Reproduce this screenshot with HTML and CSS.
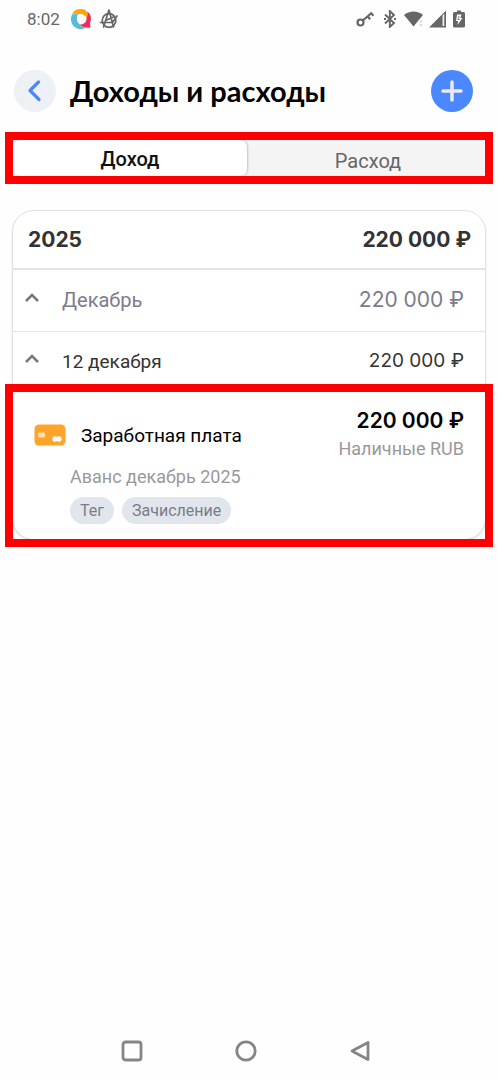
FILE: index.html
```html
<!DOCTYPE html>
<html lang="ru">
<head>
<meta charset="utf-8">
<meta name="viewport" content="width=device-width, initial-scale=1">
<title>Доходы и расходы</title>
<link rel="stylesheet" href="styles.css">
</head>
<body>
<div class="screen">
  <div class="status">
    <div class="status-group status-left">
      <span class="clock">8:02</span>
      <svg width="22" height="22" viewBox="0 0 22 22" aria-hidden="true">
        <path d="M2 6C4 2 8 .8 12 1c3.500.3 5 2 5.500 6l-.5 3.500C15 6.500 11 5 8 6.500 6 5.500 4 5.500 2 6z" fill="#ffa60d"/>
        <path d="M17.200 3.500C21 6 22 11 20 15l.5 4.500C16 20.500 12 19 9.500 16.500c4 0 7-2 7-6 1-2 1.200-4.500.7-7z" fill="#ec2d5f"/>
        <path d="M2 6.500c2-.8 4-.8 6 0-2 3.500-1.500 7 1.500 9.500 2 2.500 3.500 3.500 6.500 3.800-3.500 2.200-9 1.500-12-1.300C.5 15 .3 10 2 6.500z" fill="#55bdd5"/>
      </svg>
      <svg width="20" height="22" viewBox="0 0 20 22" fill="none" stroke="#666" stroke-width="1.700" stroke-linecap="round" stroke-linejoin="round" aria-hidden="true">
        <circle cx="10" cy="12.500" r="6.800"/>
        <path d="M4.500 19L10 2l4.500 17M1.500 14.500h12L18 8M6.500 12.500l8-3.500"/>
      </svg>
    </div>
    <div class="status-group status-right">
      <svg class="i-key" width="18" height="18" viewBox="0 0 18 18" fill="none" stroke="#666" stroke-width="2.200" aria-hidden="true">
        <circle cx="4.500" cy="12.500" r="3"/><path d="M6.800 10.500L15.500 3M14.500 2.500l3 3.200M11.200 6l3 3.200"/>
      </svg>
      <svg class="i-bt" width="12" height="18" viewBox="0 0 12 18" fill="none" stroke="#666" stroke-width="1.900" aria-hidden="true">
        <path d="M1 4.500l9 8.500-4.200 4V1L10 5 1 13.500"/><path d="M0 9h2M10 9h2" stroke-width="2"/>
      </svg>
      <svg class="i-wifi" width="20" height="18" viewBox="0 0 20 18" fill="#666" aria-hidden="true">
        <path d="M0 5C5 .3 14 .3 19 5L9.500 16.500z"/><path d="M15 12.500l2-3 2 3zM15 14l2 3 2-3z" fill="#ccc" stroke="#fff" stroke-width=".5"/>
      </svg>
      <svg class="i-cell" width="18" height="18" viewBox="0 0 18 18" aria-hidden="true">
        <path d="M0 17.500L17 .5v17z" fill="#666"/><path d="M13.500 5.500l1.800-1.800v12.300h-1.800z" fill="#eee"/>
      </svg>
      <svg width="12" height="18" viewBox="0 0 12 18" aria-hidden="true">
        <path d="M1.500 2H4V.5h4V2h2.500Q12 2 12 3.500v12.500q0 1.500-1.500 1.500h-9Q0 17.500 0 16V3.500Q0 2 1.500 2z" fill="#666"/>
        <path d="M4 4.500h4.500L7.500 8H9.500l-5 7L5 11H3z" fill="#fff"/><path d="M5.200 6.500h1l-1.500 3h2" fill="none" stroke="#666" stroke-width=".7"/>
      </svg>
    </div>
  </div>

  <header class="header">
    <button class="round back" type="button" aria-label="Назад">
      <svg width="42" height="42" viewBox="0 0 42 42" fill="none" stroke="#4b87fa" stroke-width="3.200" stroke-linecap="round" stroke-linejoin="round"><path d="M24.500 12L16 20.500l9 9"/></svg>
    </button>
    <h1 class="title">Доходы и расходы</h1>
    <button class="round add" type="button" aria-label="Добавить">
      <svg width="42" height="42" viewBox="0 0 42 42" fill="none" stroke="#ececf0" stroke-width="3.500" stroke-linecap="round"><path d="M21 12v18M12 21h18"/></svg>
    </button>
  </header>

  <div class="tabs" role="tablist">
    <button class="tab tab-active" type="button" role="tab" aria-selected="true">Доход</button>
    <button class="tab" type="button" role="tab" aria-selected="false">Расход</button>
    <span class="frame"></span>
  </div>

  <main class="card">
    <div class="year"><span>2025</span><span>220 000 ₽</span></div>
    <button class="group month" type="button" aria-expanded="true">
      <svg class="chevron" width="14" height="10" viewBox="0 0 14 10"><path d="M1 8L7 2l6 6"/></svg>
      <span class="group-name">Декабрь</span><span class="month-sum">220 000 ₽</span>
    </button>
    <button class="group day" type="button" aria-expanded="true">
      <svg class="chevron" width="14" height="10" viewBox="0 0 14 10"><path d="M1 8L7 2l6 6"/></svg>
      <span class="group-name">12 декабря</span><span class="day-sum">220 000 ₽</span>
    </button>
    <article class="entry">
      <div class="entry-top">
        <svg width="32" height="22" viewBox="0 0 32 22" aria-hidden="true">
          <rect x=".5" y=".5" width="31" height="21" rx="4.500" fill="#ffa329"/>
          <rect x="4" y="8.500" width="7" height="5" rx="1" fill="#ffdca9"/>
          <circle cx="21" cy="15" r="2.700" fill="#fff"/><circle cx="25" cy="15" r="2.700" fill="#fff"/>
        </svg>
        <span class="entry-name">Заработная плата</span>
        <div class="entry-money"><span class="entry-sum">220 000 ₽</span><span class="account">Наличные RUB</span></div>
      </div>
      <p class="note">Аванс декабрь 2025</p>
      <div class="tags"><span class="tag">Тег</span><span class="tag">Зачисление</span></div>
      <span class="frame"></span>
    </article>
  </main>

  <nav class="system-nav">
    <button type="button" aria-label="Недавние"><svg width="22" height="22" viewBox="0 0 22 22"><rect x="2" y="2" width="18" height="18" rx="2.500"/></svg></button>
    <button type="button" aria-label="Домой"><svg width="22" height="22" viewBox="0 0 22 22"><circle cx="11" cy="11" r="9.200"/></svg></button>
    <button type="button" aria-label="Назад"><svg width="22" height="22" viewBox="0 0 22 22"><path d="M19 2.500v17L3 11z"/></svg></button>
  </nav>
</div>
</body>
</html>
```
FILE: styles.css
```css
* { box-sizing: border-box; }
body { margin: 0; background: #fefefe; color: #000; font-family: Roboto, "Noto Sans", sans-serif; }
button { border: 0; padding: 0; background: none; color: inherit; font: inherit; }
svg { display: block; flex: none; }
.screen { min-height: 100vh; display: flex; flex-direction: column; }

.status { height: 37px; padding: 0 33px 0 27px; display: flex; justify-content: space-between; align-items: center; }
.status-group { display: flex; align-items: center; }
.status-left { gap: 7px; }
.clock { margin-right: 3px; font-size: 17px; color: #666; }
.i-key { margin-right: 10px; }
.i-bt { margin-right: 8px; }
.i-wifi { margin-right: 5px; }
.i-cell { margin-right: 6px; }

.header { height: 95px; padding: 13px 25px 0 14px; display: flex; align-items: center; }
.round { flex: none; width: 42px; height: 42px; border-radius: 50%; }
.back { background: #edf1f5; }
.add { background: #4b87fe; }
.title { flex: 1; margin: 0 0 0 14px; font: 700 29px/36px Lato, "Noto Sans", sans-serif; white-space: nowrap; }

.tabs { position: relative; margin: 8px 13px 0; height: 36px; display: flex; background: #f4f4f4; }
.tab { flex: 1; font-size: 20px; line-height: 24px; padding-top: 6px; color: #666; }
.tab-active { margin-right: 4px; padding-top: 2px; color: #111; font-weight: 500; background: #fff; border-radius: 7px; box-shadow: 1px 0 2px #0003; }
.frame { position: absolute; inset: -8px; border: 8px solid #f00; pointer-events: none; }

.card { margin: 34px 12px 0; border: 1px solid #e3e3e3; border-radius: 22px; background: #fff; box-shadow: 0 1px 2px #0002; }
.year { height: 59px; padding: 0 14px 0 15px; display: flex; justify-content: space-between; align-items: center; border-bottom: 2px solid #e3e3e3; font: 700 21px/28px Inter, sans-serif; color: #333; }
.group { width: 100%; padding: 0 21px 0 12px; display: flex; align-items: center; text-align: left; }
.chevron { margin: 0 23px 4px 0; fill: none; stroke: #777; stroke-width: 2.500px; }
.group-name { flex: 1; }
.month { height: 62px; padding-bottom: 2px; border-bottom: 1px solid #e3e3e3; font-size: 20px; color: #7c7c8c; }
.month-sum { font: 400 21px/28px Inter, sans-serif; }
.day { height: 60px; padding-bottom: 2px; font-size: 19px; color: #333; }
.day-sum { font: 400 19px/28px Inter, sans-serif; }

.entry { position: relative; padding: 15px 21px 15px; }
.entry-top { display: flex; align-items: center; }
.entry-name { flex: 1; margin-left: 15px; font-size: 19px; }
.entry-money { display: flex; flex-direction: column; align-items: flex-end; }
.entry-sum { font: 600 21px/28px Inter, sans-serif; }
.account { font-size: 18px; line-height: 28px; color: #999; }
.note { margin: 0 0 6px 36px; font-size: 18px; line-height: 28px; color: #999; }
.tags { display: flex; gap: 8px; margin-left: 36px; }
.tag { padding: 0 10px; border-radius: 14px; background: #e1e6ed; color: #7c7c88; font-size: 16px; line-height: 27px; }

.system-nav { margin-top: auto; padding: 0 127px 18px 121px; display: flex; justify-content: space-between; }
.system-nav svg { fill: none; stroke: #858585; stroke-width: 2.800px; stroke-linejoin: round; }
```
